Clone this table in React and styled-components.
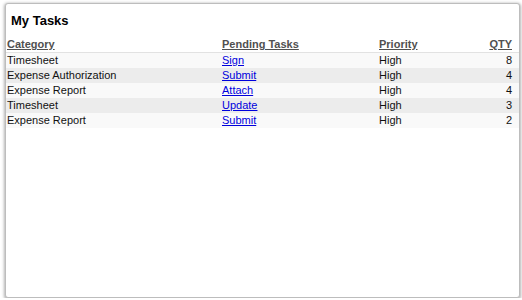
import React from "react";
import styled, { createGlobalStyle } from "styled-components";

const Global = createGlobalStyle`
  html, body { margin: 0; padding: 0; background: #ffffff; }
  body { font-family: "Liberation Sans", Arial, sans-serif; }
`;

const Card = styled.section`
  box-sizing: border-box;
  margin: 3px 0 0 5px;
  width: 515px;
  height: 295px;
  background: #ffffff;
  border: 1px solid #bdbdbd;
  border-radius: 3px;
  box-shadow: 0 1px 3px 1px rgba(0, 0, 0, 0.3);
  display: flex;
  flex-direction: column;
`;

const Title = styled.h2`
  margin: 0;
  padding: 9px 5px 0;
  height: 33px;
  box-sizing: border-box;
  font-size: 13px;
  line-height: 16px;
  font-weight: bold;
  color: #000;
`;

const Table = styled.table`
  width: 100%;
  border-collapse: collapse;
  font-size: 11px;
  table-layout: fixed;
`;

const HeadCell = styled.th`
  height: 15px;
  padding: 0 ${(p) => (p.$right ? "7px" : "0")} 0 1px;
  text-align: ${(p) => (p.$right ? "right" : "left")};
  font-weight: bold;
  color: #505050;
  text-decoration: underline;
  line-height: 15px;
  border-bottom: 1px solid #e2e2e2;
  width: ${(p) => p.$w || "auto"};
`;

const Row = styled.tr`
  background: ${(p) => (p.$alt ? "#ececec" : "#f9f9f9")};
`;

const Cell = styled.td`
  height: 15px;
  padding: 0 ${(p) => (p.$right ? "7px" : "0")} 0 1px;
  text-align: ${(p) => (p.$right ? "right" : "left")};
  line-height: 15px;
  color: #111;
  white-space: nowrap;
`;

const TaskLink = styled.a`
  color: #0000dd;
  text-decoration: underline;
`;

const tasks = [
  { category: "Timesheet", action: "Sign", priority: "High", qty: 8 },
  { category: "Expense Authorization", action: "Submit", priority: "High", qty: 4 },
  { category: "Expense Report", action: "Attach", priority: "High", qty: 4 },
  { category: "Timesheet", action: "Update", priority: "High", qty: 3 },
  { category: "Expense Report", action: "Submit", priority: "High", qty: 2 },
];

export default function App() {
  return (
    <>
      <Global />
      <Card>
        <Title>My Tasks</Title>
        <Table>
          <thead>
            <tr>
              <HeadCell $w="214px">Category</HeadCell>
              <HeadCell $w="156px">Pending Tasks</HeadCell>
              <HeadCell $w="80px">Priority</HeadCell>
              <HeadCell $right>QTY</HeadCell>
            </tr>
          </thead>
          <tbody>
            {tasks.map((t, i) => (
              <Row key={i} $alt={i % 2 === 1}>
                <Cell>{t.category}</Cell>
                <Cell>
                  <TaskLink href="#">{t.action}</TaskLink>
                </Cell>
                <Cell>{t.priority}</Cell>
                <Cell $right>{t.qty}</Cell>
              </Row>
            ))}
          </tbody>
        </Table>
      </Card>
    </>
  );
}
